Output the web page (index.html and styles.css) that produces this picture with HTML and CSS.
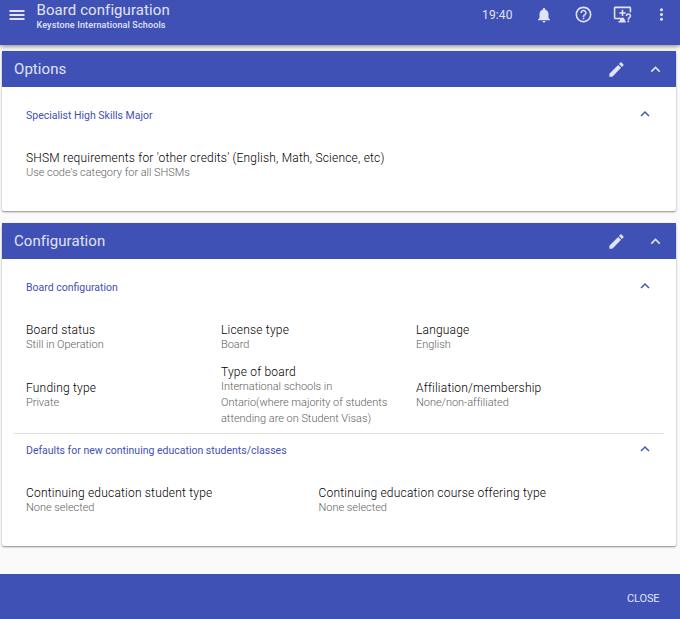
FILE: index.html
```html
<!DOCTYPE html>
<html lang="en">
<head>
<meta charset="utf-8">
<title>Board configuration</title>
<link rel="stylesheet" href="styles.css">
</head>
<body>
<svg class="defs" aria-hidden="true">
  <symbol id="chevron" viewBox="0 0 24 24"><path d="M12 8l-6 6 1.41 1.41L12 10.83l4.59 4.58L18 14z"/></symbol>
  <symbol id="pencil" viewBox="0 0 24 24"><path d="M3 17.25V21h3.75L17.81 9.94l-3.75-3.75L3 17.25zM20.71 7.04a1 1 0 0 0 0-1.41l-2.34-2.34a1 1 0 0 0-1.41 0l-1.83 1.83 3.75 3.75 1.83-1.83z"/></symbol>
</svg>
<header class="topbar">
  <svg class="icon menu" viewBox="0 0 24 24"><path d="M3 18h18v-2.400H3v2.400zm0-4.800h18v-2.400H3v2.400zM3 6v2.400h18V6H3z"/></svg>
  <div class="titles">
    <h1 class="title">Board configuration</h1>
    <div class="subtitle">Keystone International Schools</div>
  </div>
  <div class="tools">
    <span class="clock">19:40</span>
    <svg class="icon bell" viewBox="0 0 24 24"><path d="M12 22c1.1 0 2-.9 2-2h-4c0 1.1.89 2 2 2zm6-6v-5c0-3.070-1.640-5.640-4.500-6.320V4c0-.83-.67-1.500-1.500-1.500s-1.500.67-1.500 1.500v.68C7.630 5.360 6 7.920 6 11v5l-2 2v1h16v-1l-2-2z"/></svg>
    <svg class="icon" viewBox="0 0 24 24"><path d="M11 18h2v-2h-2v2zm1-16C6.480 2 2 6.480 2 12s4.480 10 10 10 10-4.480 10-10S17.520 2 12 2zm0 18c-4.410 0-8-3.590-8-8s3.590-8 8-8 8 3.590 8 8-3.590 8-8 8zm0-14c-2.210 0-4 1.790-4 4h2c0-1.100.9-2 2-2s2 .9 2 2c0 2-3 1.750-3 5h2c0-2.250 3-2.500 3-5 0-2.210-1.790-4-4-4z"/></svg>
    <svg class="icon" viewBox="0 0 24 24"><path d="M21 2H3c-1.100 0-2 .9-2 2v12c0 1.100.9 2 2 2h6v2H7v2h9v-2h-1v-2h-1v-2H3V4h18v5h2V4c0-1.100-.9-2-2-2z"/><path d="M11 6h2v3h3v2h-3v3h-2v-3H8V9h3z"/><path d="M16 14c0-2 1.500-3.500 3.500-3.500S23 12 23 14c0 2.300-2.600 2.500-2.600 4.500h-2c0-3 2.600-3.200 2.600-4.500 0-.9-.6-1.600-1.500-1.600S18 13.100 18 14zM18.400 19.700h2v2.100h-2z"/></svg>
    <svg class="icon" viewBox="0 0 24 24"><path d="M12 8c1.100 0 2-.9 2-2s-.9-2-2-2-2 .9-2 2 .9 2 2 2zm0 2c-1.100 0-2 .9-2 2s.9 2 2 2 2-.9 2-2-.9-2-2-2zm0 6c-1.100 0-2 .9-2 2s.9 2 2 2 2-.9 2-2-.9-2-2-2z"/></svg>
  </div>
</header>
<main class="content">
  <section class="card options">
    <div class="card-head"><h2>Options</h2><svg class="icon"><use href="#pencil"/></svg><svg class="icon"><use href="#chevron"/></svg></div>
    <div class="card-body">
      <div class="group">
        <div class="group-head"><h3>Specialist High Skills Major</h3><svg class="icon small"><use href="#chevron"/></svg></div>
        <dl class="fields">
          <div class="field"><dt>SHSM requirements for 'other credits' (English, Math, Science, etc)</dt><dd>Use code's category for all SHSMs</dd></div>
        </dl>
      </div>
    </div>
  </section>
  <section class="card configuration">
    <div class="card-head"><h2>Configuration</h2><svg class="icon"><use href="#pencil"/></svg><svg class="icon"><use href="#chevron"/></svg></div>
    <div class="card-body">
      <div class="group">
        <div class="group-head"><h3>Board configuration</h3><svg class="icon small"><use href="#chevron"/></svg></div>
        <dl class="fields three">
          <div class="field"><dt>Board status</dt><dd>Still in Operation</dd></div>
          <div class="field"><dt>License type</dt><dd>Board</dd></div>
          <div class="field"><dt>Language</dt><dd>English</dd></div>
          <div class="field"><dt>Funding type</dt><dd>Private</dd></div>
          <div class="field"><dt>Type of board</dt><dd>International schools in Ontario(where majority of students attending are on Student Visas)</dd></div>
          <div class="field"><dt>Affiliation/membership</dt><dd>None/non-affiliated</dd></div>
        </dl>
      </div>
      <div class="group divided">
        <div class="group-head"><h3>Defaults for new continuing education students/classes</h3><svg class="icon small"><use href="#chevron"/></svg></div>
        <dl class="fields two">
          <div class="field"><dt>Continuing education student type</dt><dd>None selected</dd></div>
          <div class="field"><dt>Continuing education course offering type</dt><dd>None selected</dd></div>
        </dl>
      </div>
    </div>
  </section>
</main>
<footer class="footer"><button class="close">CLOSE</button></footer>
</body>
</html>
```
FILE: styles.css
```css
* { box-sizing: border-box; }
body {
  margin: 0;
  height: 619px;
  display: flex;
  flex-direction: column;
  overflow: hidden;
  background: #fafafa;
  font-family: Roboto, "Liberation Sans", sans-serif;
}
h1, h2, h3, dl, dt, dd { margin: 0; font-weight: 400; }
.defs { display: none; }
.icon { width: 19px; height: 19px; fill: currentColor; flex: none; }

.topbar {
  height: 45px;
  flex: none;
  display: flex;
  align-items: flex-start;
  padding: 0 9.5px 0 7px;
  background: #3f51b5;
  color: #e1e4f4;
  box-shadow: 0 1px 5px rgba(0, 0, 0, .5);
}
.menu { width: 20px; height: 20px; margin-top: 5px; }
.titles { margin-left: 9.5px; }
.title { font-size: 15px; line-height: 18px; padding-top: 1px; letter-spacing: .08px; }
.subtitle { font-size: 9px; line-height: 12px; font-weight: 500; letter-spacing: .14px; }
.tools { margin-left: auto; height: 29px; display: flex; align-items: center; gap: 20px; }
.clock { font-size: 12px; margin-right: 2.5px; letter-spacing: .1px; }
.bell { width: 18px; height: 18px; margin-right: .5px; }

.content { flex: 1; padding: 6px 4px 0 2px; }
.card {
  background: #fff;
  border-radius: 2px;
  box-shadow: 0 1px 2px rgba(0, 0, 0, .45);
  margin-bottom: 12px;
}
.options { height: 160px; }
.configuration { height: 323px; }
.card-head {
  height: 36px;
  display: flex;
  align-items: center;
  gap: 20px;
  padding: 0 11.5px 0 12px;
  background: #3f51b5;
  color: #e1e4f4;
}
.card-head h2 { flex: 1; font-size: 15px; letter-spacing: .06px; }
.card-body { padding: 12px; }
.group-head {
  height: 32px;
  display: flex;
  align-items: center;
  justify-content: space-between;
  padding: 0 10px 0 12px;
  color: #3f51b5;
}
.group-head h3 { font-size: 10.5px; }
.small { width: 18px; height: 18px; margin-top: -2px; }
.fields { display: grid; padding: 20px 12px 0; }
.three { grid-template-columns: repeat(3, 195px); align-items: center; row-gap: 12px; padding-bottom: 6px; }
.two { grid-template-columns: 292.5px 1fr; }
.field { padding-right: 24px; }
.fields:not(.three) .field { padding-right: 0; }
dt { font-size: 12px; line-height: 14px; font-weight: 300; letter-spacing: .2px; color: #000; }
dd { font-size: 11px; line-height: 16px; font-weight: 300; color: #616161; letter-spacing: -.03px; }
.divided { border-top: 1px solid #e0e0e0; }

.footer {
  height: 45px;
  flex: none;
  display: flex;
  align-items: center;
  justify-content: flex-end;
  padding: 3px 20.5px 0 0;
  background: #3f51b5;
}
.close { border: 0; padding: 0; background: none; color: #e1e4f4; font: 400 11px Roboto, "Liberation Sans", sans-serif; letter-spacing: -.1px; }
```
